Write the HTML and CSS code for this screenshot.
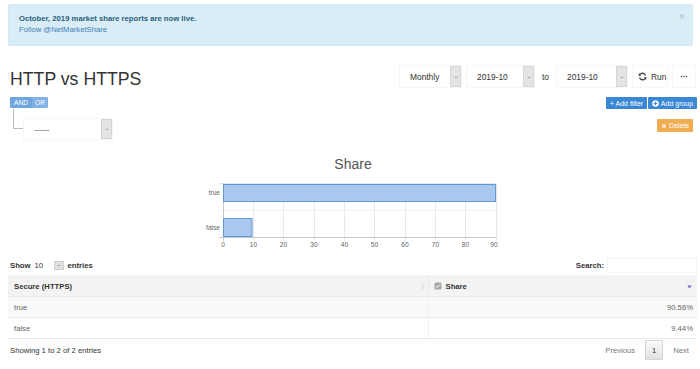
FILE: index.html
```html
<!DOCTYPE html>
<html lang="en">
<head>
    <meta charset="UTF-8">
    <title>HTTP vs HTTPS</title>
    <link rel="stylesheet" href="styles.css">
</head>
<body>
    <div class="alert">
        <span class="close">&times;</span>
        <strong>October, 2019 market share reports are now live.</strong>
        <a href="#">Follow @NetMarketShare</a>
    </div>

    <div class="page">
        <div class="head">
            <h1>HTTP vs HTTPS</h1>
            <div class="controls">
                <div class="pick w-period"><span>Monthly</span><i class="chev"><svg viewBox="0 0 8 8"><path d="M2 3.5l2 2 2-2"/></svg></i></div>
                <div class="pick w-from"><span>2019-10</span><i class="chev"><svg viewBox="0 0 8 8"><path d="M2 3.5l2 2 2-2"/></svg></i></div>
                <span class="to">to</span>
                <div class="pick w-to"><span>2019-10</span><i class="chev"><svg viewBox="0 0 8 8"><path d="M2 3.5l2 2 2-2"/></svg></i></div>
                <button class="btn-plain run">
                    <svg class="ico-refresh" viewBox="0 0 16 16"><path d="M13.2 6.2A5.4 5.4 0 0 0 3.6 4.4"/><path d="M2.8 9.8A5.4 5.4 0 0 0 12.4 11.6"/><polygon points="1.2,1.8 1.2,7 6.2,6.4"/><polygon points="14.8,14.2 14.8,9 9.8,9.6"/></svg>
                    Run
                </button>
                <button class="btn-plain more"><svg viewBox="0 0 16 4"><circle cx="3" cy="2" r="1.6"/><circle cx="8" cy="2" r="1.6"/><circle cx="13" cy="2" r="1.6"/></svg></button>
            </div>
        </div>

        <div class="group-row">
            <div class="andor"><span class="on">AND</span><span class="off">OR</span></div>
            <div class="group-btns">
                <button class="btn-blue add-filter">+ Add filter</button>
                <button class="btn-blue add-group"><svg viewBox="0 0 16 16"><circle cx="8" cy="8" r="7.5" fill="#fff"/><path d="M8 4v8M4 8h8" stroke="#3a87d4" stroke-width="2.4"/></svg>Add group</button>
            </div>
        </div>

        <div class="rule-row">
            <span class="branch"></span>
            <div class="pick w-field"><span>------</span><i class="chev"><svg viewBox="0 0 8 8"><path d="M2 3.5l2 2 2-2"/></svg></i></div>
            <button class="btn-orange"><svg viewBox="0 0 16 16"><path d="M3.5 3.5l9 9M12.5 3.5l-9 9" stroke="#fff" stroke-width="3"/></svg>Delete</button>
        </div>

        <div class="chart">
            <svg width="700" height="100" viewBox="0 0 700 100">
                <text class="c-title" x="353" y="18" text-anchor="middle">Share</text>
                <g stroke="#e8e8e8" stroke-width="1">
                    <line x1="253.5" y1="32" x2="253.5" y2="90"/>
                    <line x1="283.5" y1="32" x2="283.5" y2="90"/>
                    <line x1="314.5" y1="32" x2="314.5" y2="90"/>
                    <line x1="344.5" y1="32" x2="344.5" y2="90"/>
                    <line x1="374.5" y1="32" x2="374.5" y2="90"/>
                    <line x1="405.5" y1="32" x2="405.5" y2="90"/>
                    <line x1="435.5" y1="32" x2="435.5" y2="90"/>
                    <line x1="465.5" y1="32" x2="465.5" y2="90"/>
                    <line x1="496.5" y1="32" x2="496.5" y2="90"/>
                    <line x1="219" y1="32.5" x2="496" y2="32.5"/>
                </g>
                <line x1="219" y1="59.5" x2="496" y2="59.5" stroke="#f1f1f1"/>
                <line x1="219" y1="86.5" x2="496" y2="86.5" stroke="#c8c8c8"/>
                <line x1="223.5" y1="32" x2="223.5" y2="90" stroke="#c8c8c8"/>
                <rect x="223.5" y="33.5" width="272" height="17" fill="#a9c8ed" stroke="#6397d6"/>
                <rect x="223.5" y="67.5" width="28.5" height="18" fill="#a9c8ed" stroke="#6397d6"/>
                <g class="c-lbl" text-anchor="end">
                    <text x="220" y="44">true</text>
                    <text x="220" y="79">false</text>
                </g>
                <g class="c-lbl" text-anchor="middle">
                    <text x="223" y="96">0</text>
                    <text x="253.5" y="96">10</text>
                    <text x="283.5" y="96">20</text>
                    <text x="314" y="96">30</text>
                    <text x="344.5" y="96">40</text>
                    <text x="374.5" y="96">50</text>
                    <text x="405" y="96">60</text>
                    <text x="435.5" y="96">70</text>
                    <text x="465.5" y="96">80</text>
                    <text x="494" y="96">90</text>
                </g>
            </svg>
        </div>

        <div class="dt-top">
            <div class="length">
                <b>Show</b>
                <span class="len-val">10</span>
                <i class="chev-sm"><svg viewBox="0 0 8 8"><path d="M2.5 4h3"/></svg></i>
                <b>entries</b>
            </div>
            <div class="search">
                <b>Search:</b>
                <span class="search-box"></span>
            </div>
        </div>

        <table class="dt">
            <thead>
                <tr>
                    <th class="col-secure">Secure (HTTPS)<svg class="sort-both" viewBox="0 0 6 10"><path d="M3 0.5L5.5 4H0.5zM3 9.5L0.5 6h5z"/></svg></th>
                    <th class="col-share"><svg class="chk" viewBox="0 0 16 16"><rect x="1" y="1" width="14" height="14" rx="2.5" fill="#a8a8a8"/><path d="M4 8.2l2.8 2.6L12 5.2" stroke="#fff" stroke-width="2" fill="none"/></svg>Share<svg class="sort-desc" viewBox="0 0 8 6"><path d="M0.5 0.5h7L4 5.5z"/></svg></th>
                </tr>
            </thead>
            <tbody>
                <tr class="odd"><td>true</td><td class="num">90.56%</td></tr>
                <tr><td>false</td><td class="num">9.44%</td></tr>
            </tbody>
        </table>

        <div class="dt-bottom">
            <div class="info">Showing 1 to 2 of 2 entries</div>
            <div class="paging">
                <span class="pg-link">Previous</span>
                <span class="pg-cur">1</span>
                <span class="pg-link">Next</span>
            </div>
        </div>
    </div>
</body>
</html>
```

FILE: styles.css
```css
body {
    margin: 0;
    font-family: "Liberation Sans", Arial, sans-serif;
    font-size: 7.7px;
    color: #333;
    background-color: #fff;
}
button {
    font-family: inherit;
    border: none;
    padding: 0;
    cursor: pointer;
}

/* notice bar */
.alert {
    position: relative;
    margin: 4px 7px 0 8px;
    padding: 8px 10px 10px;
    height: 22px;
    line-height: 11px;
    background-color: #d9edf7;
    border: 1px solid #d2e9f4;
    border-radius: 2px;
    color: #31708f;
    box-sizing: content-box;
}
.alert strong {
    display: block;
    color: #2b5f7c;
}
.alert a {
    display: block;
    color: #3e80b8;
    text-decoration: none;
}
.alert .close {
    position: absolute;
    right: 7px;
    top: 6px;
    font-size: 11px;
    color: #a9bfcc;
}

.page {
    padding: 0 3px 0 10px;
}

/* title + period controls */
.head {
    display: flex;
    justify-content: space-between;
    margin-top: 19px;
    height: 24px;
}
.head h1 {
    margin: 0;
    padding-top: 2px;
    font-size: 17.7px;
    font-weight: normal;
    line-height: 24px;
    color: #333;
}
.controls {
    display: flex;
    height: 23px;
    font-size: 8.4px;
    margin-right: 1px;
}
.pick {
    display: flex;
    box-sizing: border-box;
    border: 1px solid #f6f6f6;
    background-color: #fff;
}
.pick span {
    flex: 1;
    padding-left: 10px;
    display: flex;
    align-items: center;
}
.chev {
    width: 9px;
    background-color: #e4e4e4;
    border: 1px solid #d6d6d6;
    display: flex;
    align-items: center;
    justify-content: center;
}
.chev svg {
    width: 6px;
    height: 6px;
    fill: none;
    stroke: #999;
    stroke-width: 1.2;
}
.w-period { width: 63px; }
.w-from { width: 69px; margin-left: 4px; }
.w-to { width: 72px; }
.w-field { width: 90px; height: 22px; }
.to {
    display: flex;
    align-items: center;
    padding: 0 7px;
}
.btn-plain {
    display: flex;
    align-items: center;
    background-color: #fff;
    border: 1px solid #f6f6f6;
    color: #333;
    font-size: 8.4px;
    margin-left: 4px;
}
.run {
    width: 36px;
    padding-left: 5px;
}
.ico-refresh {
    width: 9px;
    height: 9px;
    margin-right: 4px;
    fill: #444;
}
.ico-refresh path {
    fill: none;
    stroke: #444;
    stroke-width: 2.4;
}
.more {
    width: 24px;
    justify-content: center;
}
.more svg {
    width: 8px;
    height: 3px;
    fill: #444;
}

/* query builder */
.group-row {
    display: flex;
    justify-content: space-between;
    margin-top: 8px;
    height: 12px;
}
.andor {
    display: flex;
    height: 11px;
    font-size: 6.6px;
    line-height: 11px;
    color: #fff;
}
.andor span {
    text-align: center;
    background-color: #80b2e6;
}
.andor .on {
    width: 22px;
    background-color: #6fa6e0;
    border-radius: 1px 0 0 1px;
}
.andor .off {
    width: 16px;
    border-radius: 0 1px 1px 0;
}
.group-btns {
    display: flex;
    gap: 1px;
}
.btn-blue {
    display: flex;
    align-items: center;
    justify-content: center;
    height: 12px;
    background-color: #3a87d4;
    color: #fff;
    font-size: 7px;
    border-radius: 1px;
}
.add-filter { width: 41px; }
.add-group { width: 49px; }
.add-group svg {
    width: 7px;
    height: 7px;
    margin-right: 2px;
}
.rule-row {
    display: flex;
    margin-top: 9px;
    height: 22px;
}
.branch {
    align-self: flex-start;
    margin: -9px 0 0 3px;
    width: 9px;
    height: 19px;
    border-left: 1px solid #bbb;
    border-bottom: 1px solid #bbb;
}
.btn-orange {
    display: flex;
    align-items: center;
    justify-content: center;
    margin: 1px 4px 0 auto;
    width: 36px;
    height: 13px;
    background-color: #f2ad52;
    color: #fff;
    font-size: 7px;
    border-radius: 1px;
}
.btn-orange svg {
    width: 6px;
    height: 6px;
    margin-right: 2px;
}

/* chart */
.chart {
    margin: 11px -3px 0 -10px;
    height: 100px;
}
.chart svg {
    display: block;
    font-family: "Liberation Sans", Arial, sans-serif;
}
.c-title {
    font-size: 14px;
    fill: #555;
}
.c-lbl {
    font-size: 6.6px;
    fill: #666;
}

/* table */
.dt-top {
    display: flex;
    justify-content: space-between;
    align-items: center;
    margin-top: 6px;
    height: 16px;
}
.length {
    display: flex;
    align-items: center;
}
.len-val {
    margin-left: 4px;
    width: 19px;
}
.chev-sm {
    width: 8px;
    height: 7px;
    margin-right: 4px;
    background-color: #e0e0e0;
    border: 1px solid #cfcfcf;
    display: flex;
}
.chev-sm svg {
    width: 8px;
    height: 7px;
    stroke: #999;
    stroke-width: 1;
}
.search {
    display: flex;
    align-items: center;
}
.search-box {
    width: 88px;
    height: 13px;
    margin-left: 3px;
    border: 1px solid #f4f4f4;
}
.dt {
    margin: 2px 0 0 -2px;
    width: calc(100% + 2px);
    border-collapse: collapse;
}
.dt th,
.dt td {
    height: 21px;
    padding: 0 6px;
    text-align: left;
    box-sizing: border-box;
}
.dt thead tr {
    background-color: #f3f3f3;
    border-top: 1px solid #f7f7f7;
}
.dt th {
    font-weight: bold;
    position: relative;
}
.dt .col-secure {
    width: 420px;
}
.dt .col-share {
    padding-left: 5px;
    border-left: 1px solid #e9e9e9;
}
.sort-both {
    position: absolute;
    right: 3px;
    top: 7px;
    width: 4px;
    height: 7px;
    fill: #dcdcdc;
}
.chk {
    width: 8px;
    height: 8px;
    vertical-align: -1px;
    margin-right: 4px;
}
.sort-desc {
    position: absolute;
    right: 5px;
    top: 9px;
    width: 5px;
    height: 4px;
    fill: #6b6bd0;
}
.dt td {
    color: #666;
    border-top: 1px solid #e9e9e9;
}
.dt td + td {
    border-left: 1px solid #f0f0f0;
}
.dt tr.odd {
    background-color: #f9f9f9;
}
.dt tbody tr:last-child td {
    border-bottom: 1px solid #e9e9e9;
}
.dt .num {
    text-align: right;
    padding-right: 4px;
}
.dt-bottom {
    display: flex;
    justify-content: space-between;
    align-items: center;
    margin-top: 1px;
    height: 20px;
}
.paging {
    display: flex;
    align-items: center;
    margin-right: 8px;
}
.pg-link {
    color: #777;
}
.pg-cur {
    width: 18px;
    height: 20px;
    margin: 0 10px;
    box-sizing: border-box;
    display: flex;
    align-items: center;
    justify-content: center;
    border: 1px solid #d4d4d4;
    border-radius: 1px;
    background: linear-gradient(#fafafa, #e2e2e2);
}
```
